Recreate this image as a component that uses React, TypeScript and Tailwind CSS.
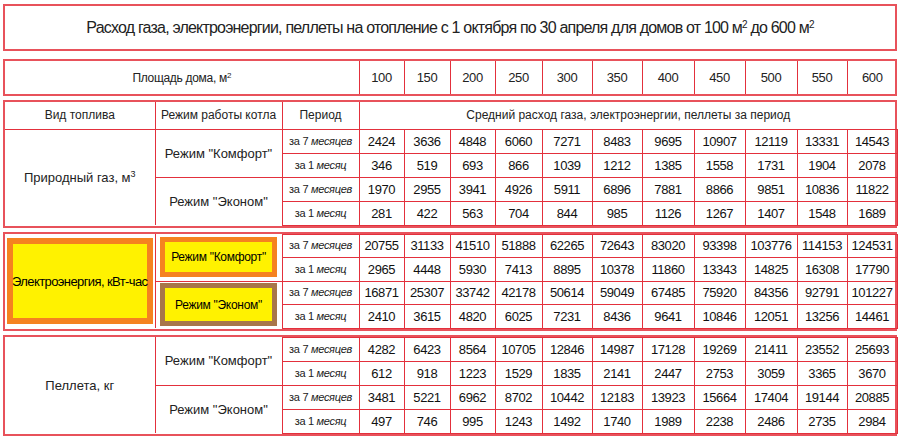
import React from "react";

const FONT = "font-['Liberation_Sans',Arial,sans-serif]";
const LINE = "border-[#e3303c]";

const AREAS = [100, 150, 200, 250, 300, 350, 400, 450, 500, 550, 600];
const COLS = [150, 127, 77, 45, 46, 45, 47, 50, 50, 52, 51, 52, 50, 50];

type Mode = { label: string; m7: number[]; m1: number[] };
type Fuel = { name: React.ReactNode; modes: Mode[] };

const GAS: Fuel = {
  name: (
    <>
      Природный газ, м<sup className="text-[9px]">3</sup>
    </>
  ),
  modes: [
    {
      label: 'Режим "Комфорт"',
      m7: [2424, 3636, 4848, 6060, 7271, 8483, 9695, 10907, 12119, 13331, 14543],
      m1: [346, 519, 693, 866, 1039, 1212, 1385, 1558, 1731, 1904, 2078],
    },
    {
      label: 'Режим "Эконом"',
      m7: [1970, 2955, 3941, 4926, 5911, 6896, 7881, 8866, 9851, 10836, 11822],
      m1: [281, 422, 563, 704, 844, 985, 1126, 1267, 1407, 1548, 1689],
    },
  ],
};

const ELEC: Fuel = {
  name: "Электроэнергия, кВт-час",
  modes: [
    {
      label: 'Режим "Комфорт"',
      m7: [20755, 31133, 41510, 51888, 62265, 72643, 83020, 93398, 103776, 114153, 124531],
      m1: [2965, 4448, 5930, 7413, 8895, 10378, 11860, 13343, 14825, 16308, 17790],
    },
    {
      label: 'Режим "Эконом"',
      m7: [16871, 25307, 33742, 42178, 50614, 59049, 67485, 75920, 84356, 92791, 101227],
      m1: [2410, 3615, 4820, 6025, 7231, 8436, 9641, 10846, 12051, 13256, 14461],
    },
  ],
};

const PELLET: Fuel = {
  name: "Пеллета, кг",
  modes: [
    {
      label: 'Режим "Комфорт"',
      m7: [4282, 6423, 8564, 10705, 12846, 14987, 17128, 19269, 21411, 23552, 25693],
      m1: [612, 918, 1223, 1529, 1835, 2141, 2447, 2753, 3059, 3365, 3670],
    },
    {
      label: 'Режим "Эконом"',
      m7: [3481, 5221, 6962, 8702, 10442, 12183, 13923, 15664, 17404, 19144, 20885],
      m1: [497, 746, 995, 1243, 1492, 1740, 1989, 2238, 2486, 2735, 2984],
    },
  ],
};

function Cols() {
  return (
    <colgroup>
      {COLS.map((w, i) => (
        <col key={i} style={{ width: w }} />
      ))}
    </colgroup>
  );
}

const td = `border ${LINE} text-center p-0 leading-none`;

function Period({ seven }: { seven: boolean }) {
  return (
    <td className={`${td} text-[11px] tracking-[-0.3px] whitespace-nowrap`}>
      за {seven ? "7" : "1"} <i>{seven ? "месяцев" : "месяц"}</i>
    </td>
  );
}

function Values({ vals }: { vals: number[] }) {
  return (
    <>
      {vals.map((v, i) => (
        <td key={i} className={`${td} text-[13px] text-[#111] tracking-[-0.4px]`}>
          {v}
        </td>
      ))}
    </>
  );
}

function Section({ fuel, rowH, header, highlight }: { fuel: Fuel; rowH: string; header?: boolean; highlight?: boolean }) {
  return (
    <div className="border-2 border-[#e8525b]">
      <table className="w-full table-fixed border-collapse">
        <Cols />
        <tbody>
          {header && (
            <tr className="h-[27px]">
              <td className={`${td} border-t-0 border-l-0 text-[12px]`}>Вид топлива</td>
              <td className={`${td} border-t-0 text-[12px]`}>Режим работы котла</td>
              <td className={`${td} border-t-0 text-[12px]`}>Период</td>
              <td colSpan={11} className={`${td} border-t-0 border-r-0 text-[12px]`}>
                Средний расход газа, электроэнергии, пеллеты за период
              </td>
            </tr>
          )}
          {fuel.modes.map((m, mi) => (
            <React.Fragment key={mi}>
              <tr className={rowH}>
                {mi === 0 && (
                  <td rowSpan={4} className={`${td} border-l-0 ${header ? "" : "border-t-0"} border-b-0 text-[13px]`}>
                    {highlight ? (
                      <div className="mx-[2px] h-[86px] border-[6px] border-[#f58220] bg-[#fff200] flex items-center justify-center text-[13px] text-black whitespace-nowrap tracking-[-0.6px]">
                        {fuel.name}
                      </div>
                    ) : (
                      fuel.name
                    )}
                  </td>
                )}
                <td rowSpan={2} className={`${td} ${!header && mi === 0 ? "border-t-0" : ""} ${mi === 1 ? "border-b-0" : ""} text-[13px]`}>
                  {highlight ? (
                    <div
                      className={`mx-auto w-[117px] flex items-center justify-center bg-[#fff200] border-[5px] text-[12px] text-black whitespace-nowrap tracking-[-0.3px] ${
                        mi === 0 ? "h-[40px] border-[#f58220]" : "h-[43px] border-[#a8764a]"
                      }`}
                    >
                      {m.label}
                    </div>
                  ) : (
                    m.label
                  )}
                </td>
                <Period seven />
                <Values vals={m.m7} />
              </tr>
              <tr className={rowH}>
                <Period seven={false} />
                <Values vals={m.m1} />
              </tr>
            </React.Fragment>
          ))}
        </tbody>
      </table>
    </div>
  );
}

export default function App() {
  return (
    <div className={`w-[900px] h-[438px] overflow-hidden bg-white text-[#222] px-[3px] pt-[4px] ${FONT}`}>
      <div className="h-[47px] border-2 border-[#e8525b] flex items-center justify-center text-[16px] tracking-[-0.8px]">
        <span>
          Расход газа, электроэнергии, пеллеты на отопление с 1 октября по 30 апреля для домов от 100 м
          <sup className="text-[10px]">2</sup> до 600 м<sup className="text-[10px]">2</sup>
        </span>
      </div>

      <div className="mt-[8px] border-2 border-[#e8525b]">
        <table className="w-full table-fixed border-collapse">
          <Cols />
          <tbody>
            <tr className="h-[33px]">
              <td colSpan={3} className={`${td} border-0 border-r text-[12px] tracking-[-0.3px]`}>
                Площадь дома, м<sup className="text-[8px]">2</sup>
              </td>
              {AREAS.map((a, i) => (
                <td key={a} className={`${td} border-y-0 ${i === AREAS.length - 1 ? "border-r-0" : ""} text-[13px] tracking-[-0.4px]`}>
                  {a}
                </td>
              ))}
            </tr>
          </tbody>
        </table>
      </div>

      <div className="mt-[4px] flex flex-col gap-[4px]">
        <Section fuel={GAS} rowH="h-[24px]" header />
        <Section fuel={ELEC} rowH="h-[23.5px]" highlight />
        <Section fuel={PELLET} rowH="h-[24px]" />
      </div>
    </div>
  );
}
